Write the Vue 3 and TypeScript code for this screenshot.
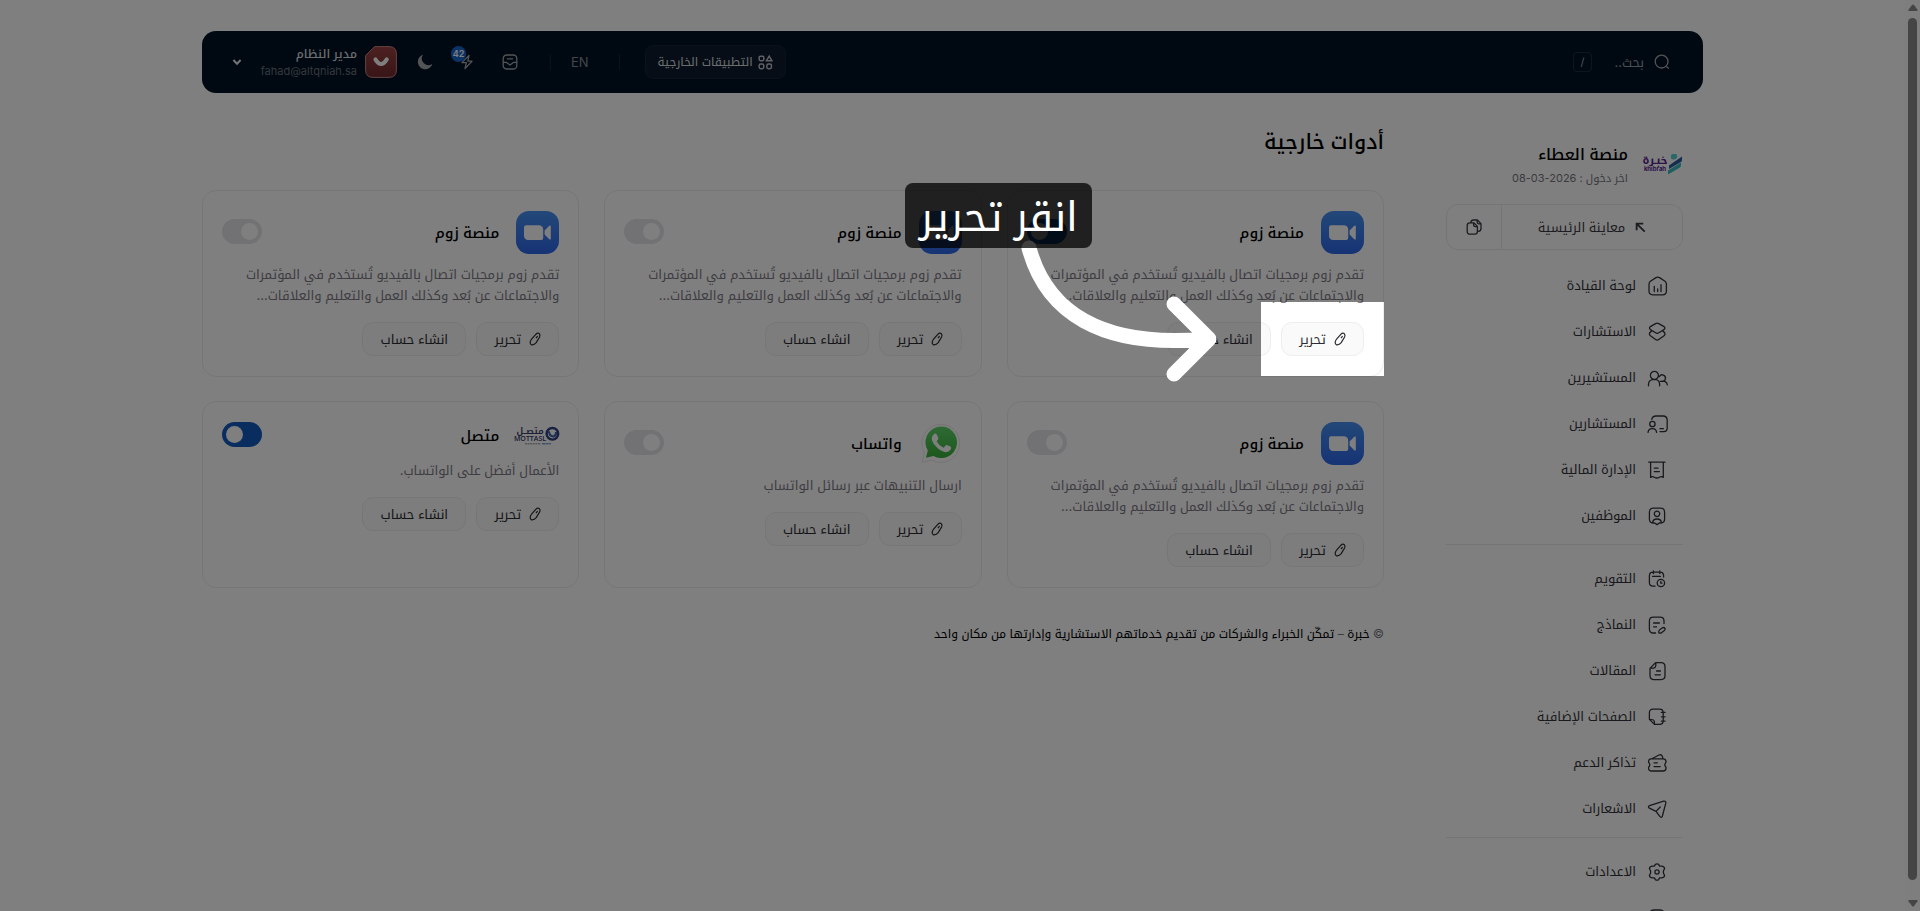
<script setup lang="ts">
interface MenuItem {
  label: string
  icon: string
}
interface Tool {
  id: number
  name: string
  logo: 'zoom' | 'whatsapp' | 'mottasl'
  text: string
  on: boolean
  guided?: boolean
}

const menu: MenuItem[][] = [
  [
    { label: 'لوحة القيادة', icon: 'M2 8.2Q2 6.3 3.4 5.3L9 1.6Q10.8.5 12.5 1.6L18 5.3Q19.4 6.3 19.4 8.2V15Q19.4 18.8 15.6 18.8H5.8Q2 18.8 2 15ZM7.3 10.3V15.6M10.7 13V15.6M14 8.7V15.6' },
    { label: 'الاستشارات', icon: 'M8.6 1.6Q10.2.8 11.8 1.6L17 4.6Q18.8 6 17 7.6L11.8 10.8Q10.2 11.8 8.6 10.8L3.4 7.6Q1.6 6 3.4 4.6ZM4.2 9.4Q1 11.6 3.4 13.8L8.6 17.6Q10.2 18.8 11.8 17.6L17 13.8Q19.4 11.6 16.2 9.4' },
    { label: 'المستشيرين', icon: 'M3.4 7.4A4 4 0 1 1 11.4 7.4A4 4 0 1 1 3.4 7.4M1.5 17.8V16Q1.8 11.6 7.3 11.4Q12.4 11.6 12.6 16V17.8M12.4 8.6A3.2 3.2 0 1 1 14.8 13.2M13.4 13.4Q19.8 12.2 20.3 16.8' },
    { label: 'المستشارين', icon: 'M4.8 5.4Q5.4 2 9 2H16Q20.2 2 20.2 6.2V14Q20.2 17.6 16.8 17.6H13M2.7 10A2.7 2.7 0 1 1 8.1 10A2.7 2.7 0 1 1 2.7 10M1 18.4Q1.4 14.6 5.3 14.6Q9.2 14.6 9.6 18.4M13 14.7H16.4' },
    { label: 'الإدارة المالية', icon: 'M1.7 2.2H18M3.6 2.2V17.4Q5.4 15.8 7.4 17.2Q9.9 18.8 12.4 17.2Q14.4 15.8 16.3 17.4V2.2M7.3 8.2H11M7.3 11.6H12.4' },
    { label: 'الموظفين', icon: 'M6.4 2.2H13.6Q17.6 2.2 17.6 6.2V13Q17.6 17 13.6 17H12.4L10 18.6L7.6 17H6.4Q2.4 17 2.4 13V6.2Q2.4 2.2 6.4 2.2ZM7.3 7.8A2.7 2.7 0 1 1 12.7 7.8A2.7 2.7 0 1 1 7.3 7.8M5.6 16.6Q6 13 10 13Q14 13 14.4 16.6' },
  ],
  [
    { label: 'التقويم', icon: 'M8 17.2H6Q2.4 17.2 2.4 13.4V6.8Q2.4 3.2 6 3.2H13Q16.6 3.2 16.6 6.8V8M6.4 1.8V4.6M12.8 1.8V4.6M5.6 7.4H13.4M10.2 14A3.7 3.7 0 1 1 17.6 14A3.7 3.7 0 1 1 10.2 14M13.8 12.4V14.2H15' },
    { label: 'النماذج', icon: 'M8.6 18H6.4Q2.4 18 2.4 14V6Q2.4 2.2 6.4 2.2H13Q17 2.2 17 6V8.6M6.6 8H12.4M6.6 11.8H9.6M11.8 17.8Q11.4 15.8 12.8 14.8L15.4 12.8Q17.2 12 18 13.4Q18.4 14.4 17.4 15.4L14.8 17.6Q13.4 18.4 11.8 17.8Z' },
    { label: 'المقالات', icon: 'M8.6 1.6H14Q18 1.6 18 5.6V14.6Q18 18.6 14 18.6H7Q3 18.6 3 14.6V7.4ZM8.8 1.8V4.8Q8.6 7 6.6 7.2H3.2M9.6 10H13.4M8 13.8H13.4' },
    { label: 'الصفحات الإضافية', icon: 'M7.4 17.4H12.6Q16.2 17.4 16.2 13.8V5.8Q16.2 2.2 12.6 2.2H6Q2.4 2.2 2.4 5.8V12.4ZM7.4 17.2V14.6Q7 12.6 5 12.6H2.6M14.4 5.4H18M14.4 9.8H18M14.4 14.2H18' },
    { label: 'تذاكر الدعم', icon: 'M4.8 5.8L12 2Q14.4 1.2 15.4 3.4L16 5.8M4.2 5.8H16Q19 5.8 19 8.6V9.4Q16.6 11.8 19 14.2V15.2Q19 18 16 18H4.6Q1.6 18 1.6 15.2V14.2Q4 11.8 1.6 9.4V8.6Q1.6 5.8 4.2 5.8ZM7 9.8H10.4M7 13.6H13.2' },
    { label: 'الاشعارات', icon: 'M2.6 6.6L16.6 2.2Q19.2 1.6 18.8 4.2L15.4 17Q14.4 19.4 12.8 17.4L9 12.4L2.4 9.2Q.4 7.6 2.6 6.6ZM9 12.4L13.2 8' },
  ],
  [
    { label: 'الاعدادات', icon: 'M8.2 2.6Q10 1.2 11.8 2.6L12.6 4.2L14.6 4.2Q17 4.2 17.6 6.4L16.6 8.6Q16 10 16.6 11.4L17.6 13.6Q17 15.8 14.6 15.8H12.6L11.8 17.4Q10 18.8 8.2 17.4L7.4 15.8H5.4Q3 15.8 2.4 13.6L3.4 11.4Q4 10 3.4 8.6L2.4 6.4Q3 4.2 5.4 4.2H7.4ZM7.9 10A2.1 2.1 0 1 1 12.1 10A2.1 2.1 0 1 1 7.9 10' },
    { label: '', icon: 'M7 2H13Q17 2 17 6V14Q17 18 13 18H7Q3 18 3 14V6Q3 2 7 2Z' },
  ],
]

const zoomText = 'تقدم زوم برمجيات اتصال بالفيديو تُستخدم في المؤتمرات والاجتماعات عن بُعد وكذلك العمل والتعليم والعلاقات...'

const tools: Tool[] = [
  { id: 1, name: 'منصة زوم', logo: 'zoom', text: zoomText, on: true, guided: true },
  { id: 2, name: 'منصة زوم', logo: 'zoom', text: zoomText, on: false },
  { id: 3, name: 'منصة زوم', logo: 'zoom', text: zoomText, on: false },
  { id: 4, name: 'منصة زوم', logo: 'zoom', text: zoomText, on: false },
  { id: 5, name: 'واتساب', logo: 'whatsapp', text: 'ارسال التنبيهات عبر رسائل الواتساب', on: false },
  { id: 6, name: 'متصل', logo: 'mottasl', text: 'الأعمال أفضل على الواتساب.', on: true },
]
</script>

<template>
  <div class="page" dir="rtl">
    <div class="shell">
      <header class="topbar">
        <label class="search">
          <svg class="i-search" viewBox="0 0 16 16"><circle cx="7.6" cy="7.6" r="6.4" /><path d="M12.4 12.6L14.8 14.6" /></svg>
          <input type="text" placeholder="بحث.." aria-label="بحث" />
          <kbd>/</kbd>
        </label>
        <div class="tools">
          <button type="button" class="apps">
            <svg class="i-apps" viewBox="0 0 16 16">
              <path d="M11.9 1.2L14.8 6H9Z" /><rect x="1.2" y="1.2" width="5" height="4.8" rx="1.4" />
              <rect x="1.2" y="9.6" width="5" height="5" rx="1.8" /><rect x="9.4" y="9.6" width="5" height="5" rx="1.8" />
            </svg>
            <span>التطبيقات الخارجية</span>
          </button>
          <span class="bar"></span>
          <button type="button" class="plain lang">EN</button>
          <span class="bar"></span>
          <button type="button" class="plain inbox" aria-label="الرسائل">
            <svg class="i16" viewBox="0 0 16 16"><rect x="1.2" y="1" width="13.6" height="14" rx="3.6" /><path d="M1.4 8.4H4.6L8 11L11.4 8.4H14.6M5.4 4.8H10.6" /></svg>
          </button>
          <button type="button" class="plain bolt" aria-label="التنبيهات">
            <svg class="i16" viewBox="0 0 16 16"><path d="M10 1.4L3 8.6H7.4L6 14.6L13 7.2H8.8Z" /></svg>
            <span class="badge">42</span>
          </button>
          <button type="button" class="plain moon" aria-label="الوضع الليلي">
            <svg class="i-moon" viewBox="0 0 16 16"><path d="M6 .8A7.4 7.4 0 1 0 15.4 9.8A6.6 6.6 0 0 1 6 .8Z" /></svg>
          </button>
          <button type="button" class="plain account">
            <svg class="avatar" viewBox="0 0 32 32">
              <defs><linearGradient id="av" x1="0" y1="0" x2="0" y2="1"><stop offset="0" stop-color="#9c4242" /><stop offset="1" stop-color="#702a2e" /></linearGradient></defs>
              <path d="M9.6.6H24Q31.4.6 31.4 8V24Q31.4 31.4 24 31.4H8Q.6 31.4.6 24V9.6Z" fill="url(#av)" stroke="#c98484" />
              <path d="M10.4 13.4Q16 22.6 21.8 13.4" fill="none" stroke="#fff" stroke-width="4" stroke-linecap="round" />
            </svg>
            <span class="who"><b>مدير النظام</b><small>fahad@altqniah.sa</small></span>
            <svg class="i-chev" viewBox="0 0 10 8"><path d="M1.4 2L5 5.8L8.6 2" /></svg>
          </button>
        </div>
      </header>

      <div class="body">
        <aside class="side">
          <div class="brand">
            <svg class="khibrah" viewBox="0 0 40 24">
              <text class="kh-ar" x="12" y="12" text-anchor="middle">خبـرة</text>
              <text class="kh-en" x="12" y="19" text-anchor="middle">khibrah</text>
              <path d="M28 3.6Q28 2 29.6 2H32.6Q34 2 34 3.4V5.4Q33 7.4 31 7.4H29.8Q28 7.4 28 5.8Z" fill="#55d0d4" />
              <path d="M26 13.4L39 4.6V8.4Q38.6 9.6 37.4 10.2L26 17Z" fill="#265c9c" />
              <path d="M25 18.4L38 10.6V13.6Q38 15 36.6 15.8L25 22.6Z" fill="#3fbcc0" />
            </svg>
            <div class="brand-text">
              <strong>منصة العطاء</strong>
              <span>اخر دخول : <bdi dir="ltr">08-03-2026</bdi></span>
            </div>
          </div>
          <div class="preview">
            <a href="#" class="preview-link">
              <svg class="i-out" viewBox="0 0 12 12"><path d="M10.6 10.6L2 2M1.8 9V1.8H9" /></svg>
              <span>معاينة الرئيسية</span>
            </a>
            <button type="button" class="copy" aria-label="نسخ">
              <svg class="i16" viewBox="0 0 16 16"><path d="M4.8 3.6Q5 1 7.6 1H11.4L15 4.6V9.6Q15 12.2 12.4 12.4M11.2 1.2V3.4Q11.4 4.8 12.8 4.8H14.8M4 3.8H7.8L11.4 7.4V12.6Q11.4 15.2 8.8 15.2H4Q1.2 15.2 1.2 12.4V6.6Q1.2 3.8 4 3.8ZM7.6 4V6.2Q7.8 7.6 9.2 7.6H11.2" /></svg>
            </button>
          </div>
          <nav>
            <ul v-for="(group, g) in menu" :key="g">
              <li v-for="(item, i) in group" :key="i">
                <a href="#"><svg class="i-menu" viewBox="0 0 21 20"><path :d="item.icon" /></svg><span v-if="item.label">{{ item.label }}</span></a>
              </li>
            </ul>
          </nav>
        </aside>

        <main class="main">
          <h1>أدوات خارجية</h1>
          <div class="grid">
            <article v-for="t in tools" :key="t.id" class="card">
              <div class="head">
                <svg v-if="t.logo === 'zoom'" class="logo" viewBox="0 0 43 43">
                  <defs><linearGradient :id="'z' + t.id" x1="0" y1="0" x2="0" y2="1"><stop offset="0" stop-color="#4690f0" /><stop offset="1" stop-color="#2d67ea" /></linearGradient></defs>
                  <rect width="43" height="43" rx="13" :fill="`url(#z${t.id})`" />
                  <path d="M8 16.4Q8 14.2 10.2 14.2H22.6Q27.2 14.2 27.2 18.8V26.4Q27.2 29 24.6 29H12.4Q8 29 8 24.6ZM28.6 19.6L33 15Q34.8 13.6 34.8 15.4V27.6Q34.8 29.6 33 28L28.6 23.6Z" fill="#fff" />
                </svg>
                <svg v-else-if="t.logo === 'whatsapp'" class="logo" viewBox="0 0 43 43">
                  <defs><linearGradient id="wa" x1="0" y1="0" x2="0" y2="1"><stop offset="0" stop-color="#5fd46c" /><stop offset="1" stop-color="#38b038" /></linearGradient></defs>
                  <path d="M3 40.4L5.4 31A19 19 0 1 1 13 38.2Z" fill="#fff" stroke="#e8e8e8" />
                  <path d="M7 35.8L8.8 28.6A15.8 15.8 0 1 1 14.4 34Z" fill="url(#wa)" />
                  <path d="M14.6 12.4Q16 10.8 17.6 12.2L19.4 16Q19.6 17.2 17.6 19.2Q20 23.8 24.6 25.8L26.8 23.2Q27.6 22.6 28.6 23.2L31.8 24.8Q32.6 25.4 31.6 27.8Q30 30.2 26.6 30.2Q21.4 29.4 17 24.6Q12.8 20 12.8 16.4Q12.8 14 14.6 12.4Z" fill="#fff" />
                </svg>
                <svg v-else class="logo wide" viewBox="0 0 43 20">
                  <circle cx="36.4" cy="7.8" r="5.8" fill="none" stroke="#33407e" stroke-width="2.4" />
                  <path d="M33 5.4Q33.4 10.6 37.4 10.4Q40.4 9.8 40 6" fill="none" stroke="#3a5fae" stroke-width="2" />
                  <text class="mo-ar" x="14" y="8" text-anchor="middle">متصــل</text>
                  <text class="mo-en" x="14" y="15" text-anchor="middle">MOTTASL</text>
                  <path d="M9 17.8H25" stroke="#88888f" stroke-dasharray="2 .6" /><path d="M26 17.8H35" stroke="#3a78c8" stroke-dasharray="3 .4" />
                </svg>
                <h2>{{ t.name }}</h2>
                <label class="switch"><input type="checkbox" role="switch" :checked="t.on" :aria-label="t.name" /></label>
              </div>
              <p>{{ t.text }}</p>
              <div class="actions">
                <div class="step">
                  <button type="button" class="btn edit">
                    <svg class="i-pen" viewBox="0 0 12 14"><path d="M6.8 2.4Q8.6.4 10.2 1.6Q11.6 2.8 10.6 5L7.2 10.6Q5.2 13.2 2.4 12.8Q1 12.2 1.2 10Q1.4 8.4 3 6.6ZM8.6 4L7 6.2" /></svg>
                    <span>تحرير</span>
                  </button>
                  <div v-if="t.guided" class="guide">
                    <div class="spot"></div>
                    <svg class="arrow" viewBox="0 0 210 142"><path d="M19 8C36 71 90 109 197 99M164 64L199 99L164 134" /></svg>
                    <div class="callout">انقر تحرير</div>
                  </div>
                </div>
                <button type="button" class="btn">انشاء حساب</button>
              </div>
            </article>
          </div>
          <footer><span>© </span><a href="#">خبرة</a><span> – </span>تمكّن الخبراء والشركات من تقديم خدماتهم الاستشارية وإدارتها من مكان واحد</footer>
        </main>
      </div>
    </div>
    <div class="scroll" aria-hidden="true">
      <svg viewBox="0 0 10 7"><path d="M5 .5Q5.6.5 6 1L9.6 5.8Q9.8 6.8 9 7H1Q.2 6.8.4 5.8L4 1Q4.4.5 5 .5Z" /></svg>
      <i></i>
      <svg class="flip" viewBox="0 0 10 7"><path d="M5 .5Q5.6.5 6 1L9.6 5.8Q9.8 6.8 9 7H1Q.2 6.8.4 5.8L4 1Q4.4.5 5 .5Z" /></svg>
    </div>
  </div>
</template>

<style>
body { margin: 0; background: #fff; }
</style>

<style scoped>
* { box-sizing: border-box; }
.page {
  display: flex;
  flex-direction: row-reverse;
  height: 100vh;
  overflow: hidden;
  background: #fff;
  color: #000;
  font-family: Inter, "Noto Kufi Arabic", "DejaVu Sans", sans-serif;
  font-size: 13px;
  line-height: 20px;
}
button, input { font: inherit; color: inherit; }
a { color: inherit; text-decoration: none; }
svg { display: block; flex: none; overflow: visible; }
.shell { flex: 1; min-width: 0; padding: 31px 202px 0; }
.scroll {
  flex: none;
  width: 15px;
  padding: 4px 3px;
  display: flex;
  flex-direction: column;
  align-items: center;
  justify-content: space-between;
  background: #fcfcfc;
}
.scroll svg { width: 10px; height: 7px; fill: #8b8b8b; }
.scroll .flip { transform: rotate(180deg); }
.scroll i { flex: 1; width: 9px; margin: 7px 0 20px; border-radius: 5px; background: #8b8b8b; }

.topbar {
  display: flex;
  align-items: center;
  justify-content: space-between;
  height: 62px;
  padding: 0 33px 0 30px;
  border-radius: 14px;
  background: #001224;
  color: #d8dade;
}
.search { display: flex; align-items: center; }
.search input { width: 50px; margin: 0 10px 0 2px; padding: 0; border: 0; outline: 0; background: none; }
.search input::placeholder { color: #9a9da3; opacity: 1; }
.search kbd {
  width: 19px; height: 20px; border: 1px solid #1b2a3a; border-radius: 4px;
  font-family: inherit; font-size: 11px; line-height: 18px; text-align: center; color: #a5a8ad;
}
.i-search { width: 16px; height: 16px; fill: none; stroke: #a5a8ad; stroke-width: 1.3; }
.tools { display: flex; align-items: center; }
.apps {
  display: flex; align-items: center; gap: 5px; height: 34px; padding: 0 12px; border: 1px solid #142334;
  border-radius: 8px; background: #0c1a2c; font-size: 12px;
}
.i-apps { width: 15px; height: 15px; fill: none; stroke: #c0c3c8; stroke-width: 1.6; }
.bar { width: 1px; height: 16px; margin: 0 25px 0 30px; background: #152536; }
.lang + .bar { margin: 0 20px; }
.plain { padding: 0; border: 0; background: none; }
.lang { color: #8a8d93; }
.i16 { width: 16px; height: 16px; fill: none; stroke: currentColor; stroke-width: 1.3; stroke-linejoin: round; stroke-linecap: round; }
.inbox { margin-right: 12px; color: #a5a8ad; }
.bolt { position: relative; margin-right: 27px; color: #a5a8ad; }
.badge {
  position: absolute; top: -8px; left: -8px; width: 15px; height: 16px; border-radius: 8px; background: #1a66cc;
  color: #fff; font-size: 9px; font-weight: 600; line-height: 16px; text-align: center;
}
.moon { margin-right: 26px; }
.i-moon { width: 16px; height: 16px; fill: #a5a8ad; }
.account { display: flex; align-items: center; margin-right: 20px; }
.avatar { width: 32px; height: 32px; }
.who { display: flex; flex-direction: column; width: 98px; margin-right: 8px; text-align: right; }
.who b { font-weight: 500; font-size: 12px; line-height: 18px; white-space: nowrap; }
.who small { font-size: 11px; line-height: 16px; color: #6b7079; }
.i-chev { width: 10px; height: 8px; margin-right: 17px; fill: none; stroke: #e6e7ea; stroke-width: 2; }

.body { display: flex; align-items: flex-start; }
.side { flex: none; width: 257px; padding: 44px 20px 0 0; }
.brand { display: flex; align-items: center; gap: 15px; height: 60px; padding-bottom: 6px; }
.khibrah { width: 40px; height: 24px; }
.kh-ar { font-size: 11px; font-weight: 700; fill: #5a2391; }
.kh-en { font-size: 6px; font-weight: 700; fill: #5a2391; }
.brand-text { display: flex; flex-direction: column; }
.brand-text strong { font-size: 16px; font-weight: 500; line-height: 28px; }
.brand-text span { font-size: 11px; line-height: 20px; color: #77777f; }
.preview { display: flex; height: 46px; margin-top: 7px; border: 1px solid #ebebee; border-radius: 12px; color: #3a3a42; }
.preview-link { flex: 1; display: flex; align-items: center; justify-content: center; gap: 10px; }
.i-out { width: 11px; height: 11px; fill: none; stroke: currentColor; stroke-width: 2; }
.copy { width: 55px; padding: 0; display: grid; place-items: center; border: 0; border-right: 1px solid #ebebee; background: none; }
nav { padding-top: 12px; }
ul { margin: 0; padding: 0; list-style: none; }
ul + ul { margin-top: 6px; padding-top: 10px; border-top: 1px solid #ebebee; }
li a { display: flex; align-items: center; gap: 11px; height: 46px; padding-right: 15px; color: #33333a; }
.i-menu { width: 21px; height: 20px; margin-top: 2px; fill: none; stroke: currentColor; stroke-width: 1.3; stroke-linejoin: round; stroke-linecap: round; }

.main { flex: 1; min-width: 0; margin-right: 62px; padding-top: 31px; }
h1 { margin: 0; font-size: 21px; font-weight: 500; line-height: 36px; }
.grid { display: grid; grid-template-columns: repeat(3, 1fr); gap: 24px 25px; margin-top: 30px; }
.card { min-width: 0; padding: 20px 19px; border: 1px solid #ededf0; border-radius: 14px; }
.head { display: flex; align-items: center; }
.logo { width: 43px; height: 43px; }
.logo.wide { height: 20px; }
.mo-ar { font-size: 9px; font-weight: 600; fill: #343a66; }
.mo-en { font-family: "Open Sans", sans-serif; font-size: 7px; font-weight: 600; fill: #343a66; }
h2 { flex: 1; margin: 0 17px 0 0; font-size: 15px; font-weight: 500; line-height: 28px; }
.switch { height: 28px; }
.switch input { appearance: none; display: flex; align-items: center; width: 40px; height: 25px; margin: 0; padding: 4px; border-radius: 13px; background: #e4e4e8; }
.switch input::before { content: ""; width: 17px; height: 17px; border-radius: 50%; background: #fff; }
.switch input:checked { justify-content: flex-end; background: #145bc0; }
.card p { margin: 10px 0 16px; line-height: 21px; color: #7d7a85; }
.actions { display: flex; gap: 10px; }
.step { position: relative; }
.btn {
  display: flex; align-items: center; justify-content: center; height: 34px; width: 104px; padding: 0;
  border: 1px solid #eeeeef; border-radius: 11px; background: #fafafa; color: #2a2a30; white-space: nowrap;
}
.btn.edit { width: 83px; gap: 8px; }
.i-pen { width: 12px; height: 14px; fill: none; stroke: currentColor; stroke-width: 1.2; }
footer { margin-top: 36px; font-size: 12px; line-height: 20px; }
footer span { color: #77777f; }

.guide { position: absolute; inset: -20px; z-index: 10; pointer-events: none; }
.spot { position: absolute; inset: 0; box-shadow: 0 0 0 3000px rgba(0, 0, 0, 0.5); }
.arrow { position: absolute; right: 164px; top: -62px; width: 210px; height: 142px; fill: none; stroke: #fff; stroke-width: 15; stroke-linecap: round; stroke-linejoin: round; }
.callout {
  position: absolute; right: 292px; top: -119px; width: 187px; height: 65px; padding-top: 2px; border-radius: 8px;
  background: rgba(0, 0, 0, 0.75); color: #fff; font-size: 41px; line-height: 63px; text-align: center; white-space: nowrap;
}
</style>
